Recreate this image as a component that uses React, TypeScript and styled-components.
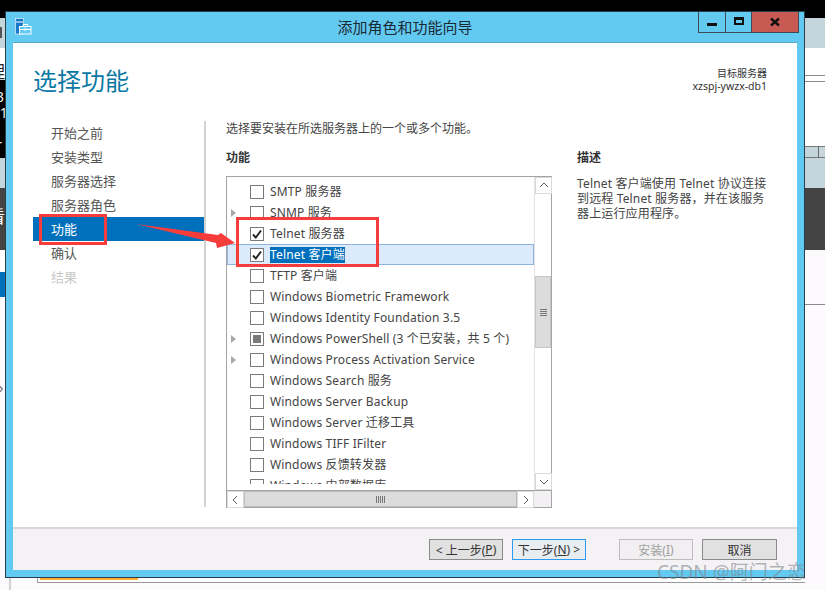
import React from "react";
import styled, { createGlobalStyle } from "styled-components";

const GlobalStyle = createGlobalStyle`
  html, body {
    margin: 0;
    padding: 0;
    width: 825px;
    height: 590px;
    overflow: hidden;
    background: #fdfafd;
  }
  * {
    box-sizing: border-box;
  }
  body {
    font-family: "Noto Sans", "Noto Sans CJK SC", sans-serif;
    font-size: 12px;
    color: #444;
  }
`;

type RowData = {
  label: string;
  check?: "on" | "mixed";
  expand?: boolean;
  selected?: boolean;
};

const navItems = ["开始之前", "安装类型", "服务器选择", "服务器角色", "功能", "确认", "结果"];

const rows: RowData[] = [
  { label: "SMTP 服务器" },
  { label: "SNMP 服务", expand: true },
  { label: "Telnet 服务器", check: "on" },
  { label: "Telnet 客户端", check: "on", selected: true },
  { label: "TFTP 客户端" },
  { label: "Windows Biometric Framework" },
  { label: "Windows Identity Foundation 3.5" },
  { label: "Windows PowerShell (3 个已安装，共 5 个)", check: "mixed", expand: true },
  { label: "Windows Process Activation Service", expand: true },
  { label: "Windows Search 服务" },
  { label: "Windows Server Backup" },
  { label: "Windows Server 迁移工具" },
  { label: "Windows TIFF IFilter" },
  { label: "Windows 反馈转发器" },
  { label: "Windows 内部数据库" },
];

const Chevron = ({ dir }: { dir: "up" | "down" | "left" | "right" }) => {
  const points = {
    up: "1,6 5,2 9,6",
    down: "1,3 5,7 9,3",
    left: "6,1 2,5 6,9",
    right: "3,1 7,5 3,9",
  }[dir];
  return (
    <svg width="10" height="10" viewBox="0 0 10 10">
      <polyline points={points} fill="none" stroke="#606060" strokeWidth="1" />
    </svg>
  );
};

const ServerManagerIcon = () => (
  <svg width="17" height="17" viewBox="0 0 17 17">
    <rect x="0.5" y="0.5" width="8" height="15.5" fill="#1a78c8" stroke="#fff" strokeWidth="0.6" />
    <rect x="1" y="3.5" width="7" height="1" fill="#fff" />
    <rect x="4.5" y="8.5" width="11.5" height="7.5" fill="#62c9f1" stroke="#fff" strokeWidth="1" />
    <path d="M8 8.5V6.5H12.5V8.5" fill="none" stroke="#fff" strokeWidth="1" />
    <path d="M4.5 11.5H16" stroke="#fff" strokeWidth="1" />
    <rect x="9" y="10.5" width="2.5" height="2" fill="#fff" />
  </svg>
);

export default function App() {
  return (
    <>
      <GlobalStyle />
      <Desktop>
        <LeftStrip>
          <Band $h={18} $bg="#000" />
          <Band $h={30} $bg="#c5d5dc">
            <GhostBox />
          </Band>
          <Band $h={32} $bg="#fff">
            <ClippedGlyph $color="#222" $top={15}>理</ClippedGlyph>
          </Band>
          <Band $h={78} $bg="#000">
            <ConsoleText>3{"\n"}.1{"\n"}{"\n"}r</ConsoleText>
          </Band>
          <Band $h={30} $bg="#c5d5dc" />
          <Band $h={62} $bg="#444">
            <ClippedGlyph $color="#fff" $top={20}>看</ClippedGlyph>
          </Band>
          <Band $h={22} $bg="#fff" />
          <Band $h={25} $bg="#0070bd" />
          <Band $h={120} $bg="#fdfafd">
            <TreeMark>›</TreeMark>
          </Band>
        </LeftStrip>
        <MiddleColumn>
          <TopEdge />
          <Shelf>
            <ShelfRail />
            <ShelfBox>
              <OrangeBar />
            </ShelfBox>
          </Shelf>
        </MiddleColumn>
        <RightStrip>
          <Band $h={18} $bg="#000" />
          <Band $h={30} $bg="#c5d5dc" />
          <Band $h={27} $bg="#fff" />
          <RuleBand $h={6} />
          <RuleBand $h={24} />
          <Band $h={41} $bg="#fff" />
          <CellBand />
          <Band $h={30} $bg="#c5d5dc" />
          <Band $h={62} $bg="#444" />
          <RuleBand $h={55} $tint="#fdfafd" $bottom />
        </RightStrip>

        <Window>
          <TitleBar>
            <ServerManagerIcon />
            <WindowTitle>添加角色和功能向导</WindowTitle>
            <Controls>
              <ControlButton>
                <MinGlyph />
              </ControlButton>
              <ControlButton>
                <MaxGlyph />
              </ControlButton>
              <CloseButton>
                <svg width="10" height="10" viewBox="0 0 10 10">
                  <path d="M1 1.5 9 8.5M9 1.5 1 8.5" stroke="#111" strokeWidth="2.4" />
                </svg>
              </CloseButton>
            </Controls>
          </TitleBar>

          <Client>
            <Header>
              <PageTitle>选择功能</PageTitle>
              <TargetInfo>
                <TargetLabel>目标服务器</TargetLabel>
                <TargetName>xzspj-ywzx-db1</TargetName>
              </TargetInfo>
            </Header>

            <Body>
              <Sidebar>
                {navItems.map((item, i) => (
                  <NavItem key={item} $active={i === 4} $disabled={i === 6}>
                    {item}
                  </NavItem>
                ))}
              </Sidebar>

              <Content>
                <Intro>选择要安装在所选服务器上的一个或多个功能。</Intro>
                <Columns>
                  <FeatureColumn>
                    <SectionTitle>功能</SectionTitle>
                    <ListBox>
                      <ListViewport>
                        {rows.map((row) => (
                          <Row key={row.label} $selected={row.selected}>
                            <Expander>{row.expand && <ExpandArrow />}</Expander>
                            <CheckBox>
                              {row.check === "on" && (
                                <svg width="12" height="12" viewBox="0 0 12 12">
                                  <path d="M2 6.5 4.8 9.5 10 2.5" fill="none" stroke="#222" strokeWidth="1.9" />
                                </svg>
                              )}
                              {row.check === "mixed" && <MixedMark />}
                            </CheckBox>
                            <RowLabel $selected={row.selected}>{row.label}</RowLabel>
                          </Row>
                        ))}
                      </ListViewport>
                      <VScroll>
                        <ScrollButton>
                          <Chevron dir="up" />
                        </ScrollButton>
                        <VTrack>
                          <VThumb>
                            <Grip $vertical />
                          </VThumb>
                        </VTrack>
                        <ScrollButton>
                          <Chevron dir="down" />
                        </ScrollButton>
                      </VScroll>
                      <HScroll>
                        <ScrollButton>
                          <Chevron dir="left" />
                        </ScrollButton>
                        <HThumb>
                          <Grip />
                        </HThumb>
                        <ScrollButton>
                          <Chevron dir="right" />
                        </ScrollButton>
                      </HScroll>
                      <ScrollCorner />
                    </ListBox>
                  </FeatureColumn>
                  <DescColumn>
                    <SectionTitle>描述</SectionTitle>
                    <DescText>Telnet 客户端使用 Telnet 协议连接到远程 Telnet 服务器，并在该服务器上运行应用程序。</DescText>
                  </DescColumn>
                </Columns>
              </Content>
            </Body>

            <Footer>
              <WizardButton>&lt; 上一步(<u>P</u>)</WizardButton>
              <WizardButton $focused>下一步(<u>N</u>) &gt;</WizardButton>
              <WizardButton $disabled $spaced>安装(<u>I</u>)</WizardButton>
              <WizardButton>取消</WizardButton>
            </Footer>
          </Client>
        </Window>

        <NavMarker />
        <RowsMarker />
        <Arrow width="110" height="30" viewBox="0 0 110 30">
          <polygon points="1,1 83,12 86,10 100,20 82,25 81,20" fill="#f73c3c" />
        </Arrow>
        <Watermark>CSDN @阿门之恋</Watermark>
      </Desktop>
    </>
  );
}

const Desktop = styled.div`
  position: relative;
  display: flex;
  width: 825px;
  height: 590px;
  overflow: hidden;
  background: #fdfafd;
`;

const LeftStrip = styled.div`
  width: 5px;
  display: flex;
  flex-direction: column;
  flex-shrink: 0;
`;

const RightStrip = styled.div`
  width: 20px;
  display: flex;
  flex-direction: column;
  flex-shrink: 0;
`;

const MiddleColumn = styled.div`
  flex: 1;
  display: flex;
  flex-direction: column;
  justify-content: space-between;
`;

const TopEdge = styled.div`
  height: 11px;
  background: #000;
`;

const Shelf = styled.div`
  height: 13px;
  display: flex;
`;

const ShelfRail = styled.div`
  width: 2px;
  margin-left: 4px;
  background: #d2d2d2;
`;

const ShelfBox = styled.div`
  flex: 1;
  height: 6px;
  margin-left: 26px;
  padding-left: 2px;
  border-left: 1px solid #999;
  border-bottom: 1px solid #999;
  background: #fff;
`;

const OrangeBar = styled.div`
  width: 98px;
  height: 3px;
  margin-left: 0;
  background: #ffae36;
`;

const Band = styled.div<{ $h: number; $bg: string }>`
  height: ${(p) => p.$h}px;
  background: ${(p) => p.$bg};
  overflow: hidden;
  flex-shrink: 0;
`;

const RuleBand = styled.div<{ $h: number; $tint?: string; $bottom?: boolean }>`
  height: ${(p) => p.$h}px;
  background: ${(p) => p.$tint || "#fff"};
  border-top: ${(p) => (p.$bottom ? "none" : "1px solid #8a8a8a")};
  border-bottom: ${(p) => (p.$bottom ? "1px solid #8a8a8a" : "none")};
  flex-shrink: 0;
`;

const CellBand = styled.div`
  height: 12px;
  background: linear-gradient(90deg, #c5d5dc 0 13px, #666 13px 14px, #c5d5dc 14px);
  border-top: 1px solid #777;
  border-bottom: 1px solid #777;
  flex-shrink: 0;
`;

const GhostBox = styled.div`
  width: 2px;
  height: 11px;
  margin-top: 9px;
  background: #555;
`;

const ClippedGlyph = styled.div<{ $color: string; $top: number }>`
  margin: ${(p) => p.$top}px 0 0 -12px;
  font-size: 17px;
  line-height: 18px;
  color: ${(p) => p.$color};
`;

const ConsoleText = styled.div`
  margin: 9px 0 0 -4px;
  color: #eee;
  font-size: 14px;
  line-height: 16px;
  white-space: pre;
`;

const TreeMark = styled.div`
  margin: 84px 0 0 -1px;
  font-size: 14px;
  line-height: 14px;
  color: #666;
`;

const Window = styled.div`
  position: absolute;
  left: 5px;
  top: 11px;
  width: 800px;
  height: 567px;
  display: flex;
  flex-direction: column;
  padding: 0 7px 7px;
  background: #62c9f1;
  border: 1px solid #2a3f4c;
`;

const TitleBar = styled.div`
  height: 30px;
  margin: 0 -7px;
  padding: 0 5px;
  display: grid;
  grid-template-columns: 1fr auto 1fr;
  align-items: start;
  flex-shrink: 0;
  > svg {
    margin: 6px 0 0 4px;
  }
`;

const WindowTitle = styled.div`
  font-size: 15px;
  line-height: 30px;
  color: #1a2a33;
`;

const Controls = styled.div`
  justify-self: end;
  display: flex;
  height: 21px;
  border: 1px solid #3d4b55;
  border-top: none;
`;

const ControlButton = styled.div`
  width: 27px;
  display: flex;
  align-items: center;
  justify-content: center;
  border-right: 1px solid #3d4b55;
  &:nth-child(2) {
    width: 26px;
  }
`;

const CloseButton = styled.div`
  width: 46px;
  display: flex;
  align-items: center;
  justify-content: center;
  background: #c75a52;
`;

const MinGlyph = styled.div`
  width: 10px;
  height: 3px;
  margin-top: 5px;
  background: #111;
`;

const MaxGlyph = styled.div`
  width: 10px;
  height: 8px;
  margin-bottom: 3px;
  border: 2px solid #111;
  border-top-width: 3px;
`;

const Client = styled.div`
  flex: 1;
  display: flex;
  flex-direction: column;
  min-height: 0;
  background: #fff;
  border-top: 1px solid #5aa9c9;
`;

const Header = styled.div`
  height: 78px;
  padding: 0 30px 0 20px;
  display: flex;
  justify-content: space-between;
  flex-shrink: 0;
`;

const PageTitle = styled.h1`
  margin: 20px 0 0;
  font-size: 24px;
  line-height: 36px;
  font-weight: 400;
  color: #0b78a3;
`;

const TargetInfo = styled.div`
  margin-top: 23px;
  text-align: right;
  color: #333;
`;

const TargetLabel = styled.div`
  font-size: 10px;
  line-height: 14px;
`;

const TargetName = styled.div`
  font-size: 10.5px;
  line-height: 13px;
`;

const Body = styled.div`
  flex: 1;
  display: flex;
  min-height: 0;
  padding: 0 0 20px 20px;
`;

const Sidebar = styled.nav`
  width: 173px;
  padding-top: 0;
  border-right: 2px solid #d2d2d2;
  display: flex;
  flex-direction: column;
  flex-shrink: 0;
`;

const NavItem = styled.div<{ $active?: boolean; $disabled?: boolean }>`
  height: 24px;
  width: 171px;
  padding-left: 18px;
  font-size: 13px;
  line-height: 24px;
  background: ${(p) => (p.$active ? "#0070bd" : "transparent")};
  color: ${(p) => (p.$active ? "#fff" : p.$disabled ? "#c8c8c8" : "#555")};
`;

const Content = styled.div`
  flex: 1;
  padding-left: 20px;
  min-width: 0;
`;

const Intro = styled.div`
  font-size: 12px;
  line-height: 16px;
  color: #444;
`;

const Columns = styled.div`
  display: flex;
  gap: 25px;
  margin-top: 13px;
`;

const FeatureColumn = styled.div`
  width: 326px;
  flex-shrink: 0;
`;

const DescColumn = styled.div`
  width: 192px;
  flex-shrink: 0;
`;

const SectionTitle = styled.div`
  font-size: 12px;
  line-height: 16px;
  font-weight: 700;
  color: #333;
  margin-bottom: 10px;
`;

const DescText = styled.p`
  margin: 0;
  padding-top: 0;
  font-size: 12px;
  line-height: 15px;
  letter-spacing: 0.15px;
  color: #444;
`;

const ListBox = styled.div`
  height: 332px;
  display: grid;
  grid-template-columns: 1fr 17px;
  grid-template-rows: 1fr 17px;
  border: 1px solid #a4a4a4;
  background: #fff;
`;

const ListViewport = styled.div`
  margin-bottom: 6px;
  padding-top: 4px;
  overflow: hidden;
  min-height: 0;
`;

const Row = styled.div<{ $selected?: boolean }>`
  height: 21px;
  display: flex;
  align-items: center;
  background: ${(p) => (p.$selected ? "#dceafd" : "transparent")};
  box-shadow: ${(p) => (p.$selected ? "inset 0 0 0 1px #8fb3dc" : "none")};
`;

const Expander = styled.div`
  width: 23px;
  padding-left: 4px;
  flex-shrink: 0;
  display: flex;
  align-items: center;
`;

const ExpandArrow = styled.div`
  width: 0;
  height: 0;
  border-left: 5px solid #a8a8a8;
  border-top: 4.5px solid transparent;
  border-bottom: 4.5px solid transparent;
`;

const CheckBox = styled.div`
  width: 14px;
  height: 14px;
  margin-right: 6px;
  flex-shrink: 0;
  display: flex;
  align-items: center;
  justify-content: center;
  background: #fff;
  border: 1px solid #7a7a7a;
`;

const MixedMark = styled.div`
  width: 8px;
  height: 8px;
  background: #7a7a7a;
`;

const RowLabel = styled.span<{ $selected?: boolean }>`
  font-size: 12px;
  line-height: 16px;
  white-space: nowrap;
  letter-spacing: 0.15px;
  color: ${(p) => (p.$selected ? "#fff" : "#444")};
  background: ${(p) => (p.$selected ? "#0070bd" : "transparent")};
`;

const VScroll = styled.div`
  display: flex;
  flex-direction: column;
  border-left: 1px solid #e3e3e3;
`;

const ScrollButton = styled.div`
  width: 17px;
  height: 17px;
  display: flex;
  align-items: center;
  justify-content: center;
  flex-shrink: 0;
  background: #fff;
  border: 1px solid #dadada;
`;

const VTrack = styled.div`
  flex: 1;
  padding-top: 82px;
`;

const VThumb = styled.div`
  height: 72px;
  display: flex;
  align-items: center;
  justify-content: center;
  background: #dcdcdc;
  border: 1px solid #c6c6c6;
`;

const HScroll = styled.div`
  display: flex;
  border-top: 1px solid #a4a4a4;
`;

const HThumb = styled.div`
  flex: 1;
  display: flex;
  align-items: center;
  justify-content: center;
  background: #dcdcdc;
  border: 1px solid #bdbdbd;
`;

const Grip = styled.div<{ $vertical?: boolean }>`
  width: ${(p) => (p.$vertical ? "7px" : "9px")};
  height: 7px;
  background: repeating-linear-gradient(
    ${(p) => (p.$vertical ? "0deg" : "90deg")},
    #777 0 1px,
    transparent 1px 2px
  );
`;

const ScrollCorner = styled.div`
  background: #f2f0f2;
  border-top: 1px solid #a4a4a4;
`;

const Footer = styled.div`
  height: 43px;
  flex-shrink: 0;
  padding: 10px 20px 0 0;
  display: flex;
  justify-content: flex-end;
  align-items: flex-start;
  gap: 9px;
  background: #f5f2f5;
  border-top: 2px solid #d8d8d8;
`;

const WizardButton = styled.div<{ $focused?: boolean; $disabled?: boolean; $spaced?: boolean }>`
  width: 74px;
  height: 21px;
  margin-left: ${(p) => (p.$spaced ? "24px" : "0")};
  display: flex;
  align-items: center;
  justify-content: center;
  font-size: 12px;
  white-space: pre;
  background: ${(p) => (p.$disabled ? "#f1eff1" : p.$focused ? "#e8edf2" : "#e1e1e1")};
  border: 1px solid ${(p) => (p.$disabled ? "#bdbdbd" : p.$focused ? "#2a9bf0" : "#8a8a8a")};
  color: ${(p) => (p.$disabled ? "#a0a0a0" : "#333")};
  &:last-child {
    width: 75px;
  }
`;

const NavMarker = styled.div`
  position: absolute;
  left: 39px;
  top: 214px;
  width: 68px;
  height: 31px;
  border: 3px solid #f73c3c;
`;

const RowsMarker = styled.div`
  position: absolute;
  left: 236px;
  top: 217px;
  width: 143px;
  height: 50px;
  border: 3px solid #f73c3c;
`;

const Arrow = styled.svg`
  position: absolute;
  left: 135px;
  top: 223px;
`;

const Watermark = styled.div`
  position: absolute;
  left: 657px;
  top: 561px;
  font-size: 19px;
  line-height: 22px;
  white-space: nowrap;
  color: rgba(125, 135, 140, 0.6);
`;
